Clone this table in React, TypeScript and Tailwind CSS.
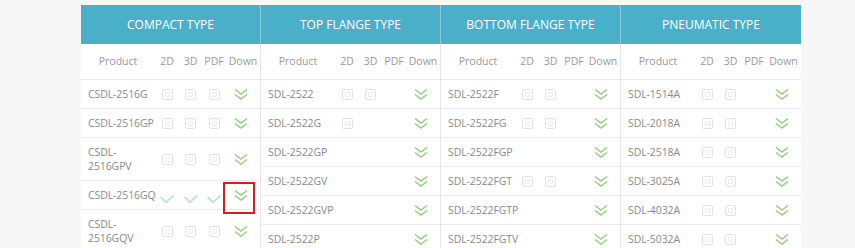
import React from "react";

type Mark = "box" | "check" | null;

type Row = {
  name: string;
  d2: Mark;
  d3: Mark;
  pdf: Mark;
  split?: boolean;
  focus?: boolean;
};

type Group = {
  title: string;
  rows: Row[];
};

const b3 = (name: string, split = false): Row => ({ name, d2: "box", d3: "box", pdf: "box", split });
const b2 = (name: string): Row => ({ name, d2: "box", d3: "box", pdf: null });
const b0 = (name: string): Row => ({ name, d2: null, d3: null, pdf: null });

const groups: Group[] = [
  {
    title: "COMPACT TYPE",
    rows: [
      b3("CSDL-2516G"),
      b3("CSDL-2516GP"),
      b3("CSDL-2516GPV", true),
      { name: "CSDL-2516GQ", d2: "check", d3: "check", pdf: "check", focus: true },
      b3("CSDL-2516GQV", true),
    ],
  },
  {
    title: "TOP FLANGE TYPE",
    rows: [
      b2("SDL-2522"),
      { name: "SDL-2522G", d2: "box", d3: null, pdf: null },
      b0("SDL-2522GP"),
      b0("SDL-2522GV"),
      b0("SDL-2522GVP"),
      b0("SDL-2522P"),
    ],
  },
  {
    title: "BOTTOM FLANGE TYPE",
    rows: [
      b2("SDL-2522F"),
      b2("SDL-2522FG"),
      b0("SDL-2522FGP"),
      b2("SDL-2522FGT"),
      b0("SDL-2522FGTP"),
      b0("SDL-2522FGTV"),
    ],
  },
  {
    title: "PNEUMATIC TYPE",
    rows: [
      b2("SDL-1514A"),
      b2("SDL-2018A"),
      b2("SDL-2518A"),
      b2("SDL-3025A"),
      b2("SDL-4032A"),
      b2("SDL-5032A"),
    ],
  },
];

function FileBox() {
  return (
    <span className="inline-flex h-[11px] w-[11px] items-center justify-center rounded-[2px] border border-[#e2e2e2]">
      <span className="h-[5px] w-[5px] rounded-[1px] border border-[#ececec]" />
    </span>
  );
}

function CheckMark() {
  return (
    <svg width="14" height="9" viewBox="0 0 14 9" className="mt-[9px]">
      <polyline points="0.5,2 6,7.5 13.5,0.5" fill="none" stroke="#a9d3e3" strokeWidth="1.1" />
    </svg>
  );
}

function DownIcon() {
  return (
    <svg width="14" height="13" viewBox="0 0 14 13">
      <polyline points="1,1.5 7,6 13,1.5" fill="none" stroke="#93cd80" strokeWidth="1.4" />
      <polyline points="1,6.5 7,11 13,6.5" fill="none" stroke="#93cd80" strokeWidth="1.4" />
    </svg>
  );
}

function Cell({ mark }: { mark: Mark }) {
  if (mark === "box") return <FileBox />;
  if (mark === "check") return <CheckMark />;
  return null;
}

function ProductName({ row }: { row: Row }) {
  if (!row.split) return <>{row.name}</>;
  const [a, b] = row.name.split("-");
  return (
    <>
      {a}-
      <br />
      {b}
    </>
  );
}

function TypeTable({ group, last }: { group: Group; last: boolean }) {
  return (
    <div className={`w-[180px] bg-white ${last ? "" : "border-r border-[#e6e6e6]"}`}>
      <div
        className={`flex h-[39px] items-center justify-center bg-[#4aafc9] text-[12px] text-white ${
          last ? "" : "-mr-px border-r border-[#86cadb]"
        }`}
      >
        {group.title}
      </div>
      <div className="grid h-[36px] grid-cols-[74px_24px_23px_24px_1fr] items-center border-b border-[#ececec] text-center text-[10.5px] text-[#999]">
        <span>Product</span>
        <span>2D</span>
        <span>3D</span>
        <span>PDF</span>
        <span>Down</span>
      </div>
      {group.rows.map((row) => (
        <div
          key={row.name}
          className="grid min-h-[29px] grid-cols-[74px_24px_23px_24px_1fr] items-center border-b border-[#ececec] text-[10.5px] tracking-[-0.1px] text-[#8a8a8a]"
        >
          <span className="whitespace-nowrap py-[7px] pl-[7px] leading-[14px]">
            <ProductName row={row} />
          </span>
          <span className="flex justify-center">
            <Cell mark={row.d2} />
          </span>
          <span className="flex justify-center">
            <Cell mark={row.d3} />
          </span>
          <span className="flex justify-center">
            <Cell mark={row.pdf} />
          </span>
          <span className="relative flex justify-center pr-[4px]">
            <DownIcon />
            {row.focus && (
              <span className="absolute left-[-3px] top-[-7px] h-[32px] w-[32px] border-2 border-[#d21f1f]" />
            )}
          </span>
        </div>
      ))}
    </div>
  );
}

export default function App() {
  return (
    <div className="h-[248px] overflow-hidden bg-[#f7f7f7] font-['Open_Sans',sans-serif]">
      <div className="ml-[81px] flex w-[720px] items-start pt-[5px]">
        {groups.map((g, i) => (
          <TypeTable key={g.title} group={g} last={i === groups.length - 1} />
        ))}
      </div>
    </div>
  );
}
